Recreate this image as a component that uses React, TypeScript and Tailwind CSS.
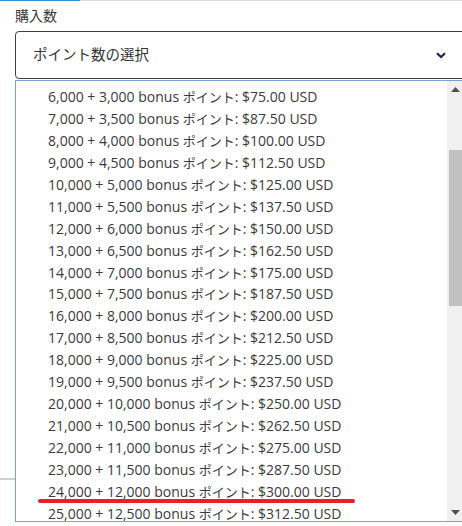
import React from "react";

const rows: [string, string, string][] = [
  ["6,000", "3,000", "75.00"],
  ["7,000", "3,500", "87.50"],
  ["8,000", "4,000", "100.00"],
  ["9,000", "4,500", "112.50"],
  ["10,000", "5,000", "125.00"],
  ["11,000", "5,500", "137.50"],
  ["12,000", "6,000", "150.00"],
  ["13,000", "6,500", "162.50"],
  ["14,000", "7,000", "175.00"],
  ["15,000", "7,500", "187.50"],
  ["16,000", "8,000", "200.00"],
  ["17,000", "8,500", "212.50"],
  ["18,000", "9,000", "225.00"],
  ["19,000", "9,500", "237.50"],
  ["20,000", "10,000", "250.00"],
  ["21,000", "10,500", "262.50"],
  ["22,000", "11,000", "275.00"],
  ["23,000", "11,500", "287.50"],
  ["24,000", "12,000", "300.00"],
  ["25,000", "12,500", "312.50"],
];

export default function App() {
  return (
    <div
      className="relative w-[462px] h-[526px] overflow-hidden bg-white text-[#333]"
      style={{ fontFamily: '"Open Sans", "Noto Sans CJK JP", sans-serif' }}
    >
      <div className="flex h-px">
        <div className="w-[80px] bg-[#2b8fe0]" />
        <div className="flex-1 bg-[#dcdce2]" />
      </div>
      <div className="pl-[15px]">
        <div className="pt-[6px] text-[14px] leading-[17px] text-[#3a3a3a]">購入数</div>
        <div className="mt-[7px] flex h-[48px] w-[480px] items-center rounded-[4px] border border-[#3d3d45] pl-[17px] pr-[48px]">
          <span className="text-[14.5px] text-[#333]">ポイント数の選択</span>
          <div className="flex-1" />
          <svg width="10" height="7" viewBox="0 0 10 7">
            <path d="M1 1.2 L5 5 L9 1.2" fill="none" stroke="#1d2150" strokeWidth="2.2" />
          </svg>
        </div>
        <div className="relative mt-px flex h-[442px] w-[450px] border border-[#7d9fd8]">
          <div className="flex-1 pl-[32px] pt-[5px]">
            {rows.map(([a, b, c]) => (
              <div key={a} className="h-[21.95px] whitespace-nowrap text-[14px] leading-[21.95px] text-[#3a3a3a]">
                {a} + {b} bonus <span className="text-[13px]">ポイント</span>: ${c} USD
              </div>
            ))}
          </div>
          <div className="flex w-[17px] flex-col bg-[#f0f0f0]">
            <div className="flex h-[17px] items-center justify-center">
              <svg width="9" height="5" viewBox="0 0 9 5">
                <path d="M0 5 L4.5 0 L9 5 Z" fill="#505050" />
              </svg>
            </div>
            <div className="mt-[52px] ml-[2px] h-[156px] w-[13px] bg-[#c1c1c1]" />
            <div className="flex-1" />
            <div className="flex h-[17px] items-center justify-center">
              <svg width="9" height="5" viewBox="0 0 9 5">
                <path d="M0 0 L4.5 5 L9 0 Z" fill="#505050" />
              </svg>
            </div>
          </div>
        </div>
      </div>
      <div className="absolute left-0 top-[478px] h-[2px] w-[15px] bg-[#d0d0d0]" />
      <div className="absolute left-[38px] top-[499px] h-[4px] w-[317px] rounded-full bg-[#e8202a]" />
    </div>
  );
}
